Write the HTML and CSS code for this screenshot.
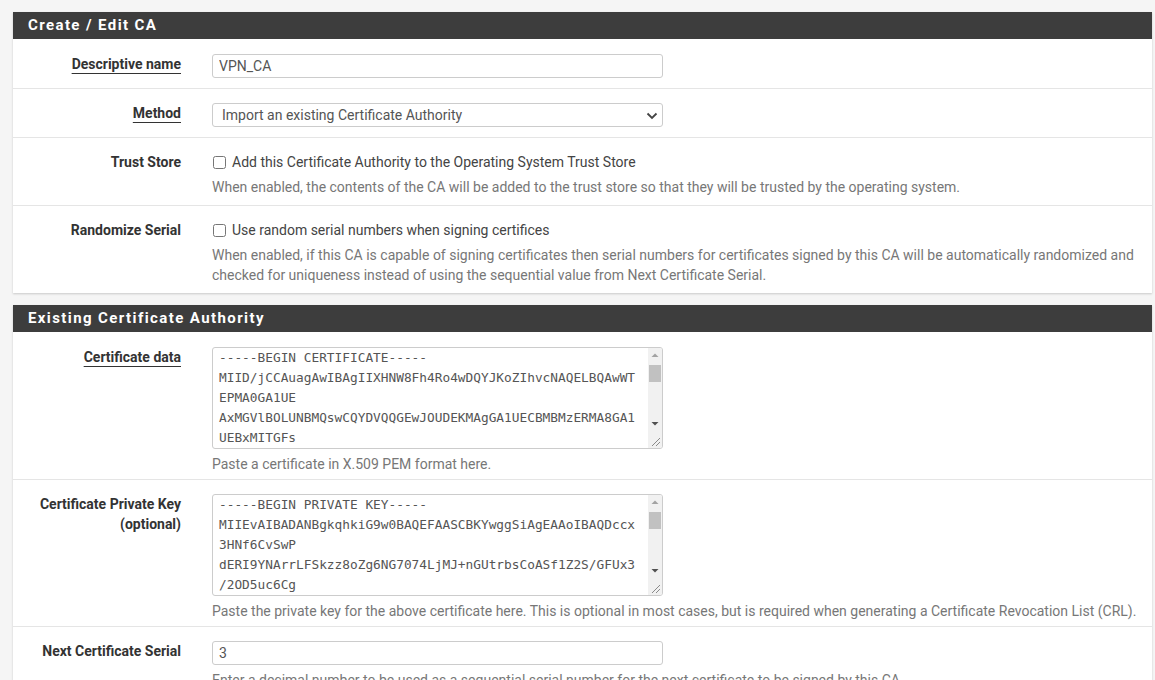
FILE: index.html
```html
<!DOCTYPE html>
<html>
<head>
<meta charset="utf-8">
<link rel="stylesheet" href="styles.css">
</head>
<body>
<div class="panel">
  <div class="panel-heading">Create / Edit CA</div>
  <div class="form-row">
    <div class="label-col"><span class="req">Descriptive name</span></div>
    <div class="field-col">
      <input class="text-input" type="text" value="VPN_CA">
    </div>
  </div>
  <div class="form-row">
    <div class="label-col"><span class="req">Method</span></div>
    <div class="field-col">
      <div class="select-wrap">
        <select class="select-input">
          <option>Import an existing Certificate Authority</option>
        </select>
        <svg class="chevron" width="12" height="8" viewBox="0 0 12 8"><path d="M1.5 1.5 L6 6 L10.5 1.5" fill="none" stroke="#444" stroke-width="1.8"/></svg>
      </div>
    </div>
  </div>
  <div class="form-row check-row">
    <div class="label-col">Trust Store</div>
    <div class="field-col">
      <label class="check-line"><input type="checkbox" class="check"> Add this Certificate Authority to the Operating System Trust Store</label>
      <div class="help">When enabled, the contents of the CA will be added to the trust store so that they will be trusted by the operating system.</div>
    </div>
  </div>
  <div class="form-row check-row">
    <div class="label-col">Randomize Serial</div>
    <div class="field-col">
      <label class="check-line"><input type="checkbox" class="check"> Use random serial numbers when signing certifices</label>
      <div class="help">When enabled, if this CA is capable of signing certificates then serial numbers for certificates signed by this CA will be automatically randomized and checked for uniqueness instead of using the sequential value from Next Certificate Serial.</div>
    </div>
  </div>
</div>

<div class="panel">
  <div class="panel-heading">Existing Certificate Authority</div>
  <div class="form-row area-row">
    <div class="label-col"><span class="req">Certificate data</span></div>
    <div class="field-col">
      <div class="area-wrap">
        <textarea class="area" spellcheck="false">-----BEGIN CERTIFICATE-----
MIID/jCCAuagAwIBAgIIXHNW8Fh4Ro4wDQYJKoZIhvcNAQELBQAwWT
EPMA0GA1UE
AxMGVlBOLUNBMQswCQYDVQQGEwJOUDEKMAgGA1UECBMBMzERMA8GA1
UEBxMITGFs
aXRwdXIxDDAKBgNVBAoTA0VOQzEUMBIGA1UECxMLRW5naW5lZXJp
bmcwHhcNMjQwMTE1MTAzMDAwWhcNMzQwMTEyMTAzMDAwWjBTMQ8w
DQYDVQQDEwZWUE5fQ0ExCzAJBgNVBAYTAk5QMQowCAYDVQQIEwEz
MREwDwYDVQQHEwhMYWxpdHB1cjEMMAoGA1UEChMDRU5DMRQwEgYD
VQQLEwtFbmdpbmVlcmluZzCCASIwDQYJKoZIhvcNAQEBBQADggEP
ADCCAQoCggEBALx2m9QfG5hXk3ZpT1bVqK8cR2nL0wYdE4sHa7uJ
Pq9Xc3BvN6tM1yRkF8wGe2iLz5oD0sAh7jUqW4nVb9yTc1KpX3mE
-----END CERTIFICATE-----</textarea>
        <div class="fake-scroll" aria-hidden="true">
          <div class="sb-btn"><svg width="14" height="15" viewBox="0 0 14 15"><path d="M3.5 9 L7 5.5 L10.5 9 Z" fill="#a3a3a3"/></svg></div>
          <div class="sb-track"><div class="sb-thumb"></div></div>
          <div class="sb-btn"><svg width="14" height="15" viewBox="0 0 14 15"><path d="M3.5 6 L7 9.5 L10.5 6 Z" fill="#505050"/></svg></div>
          <div class="sb-corner"><svg width="14" height="15" viewBox="0 0 14 15"><path d="M4 13 L12 5 M8 13 L12 9" stroke="#8a8a8a" stroke-width="1"/></svg></div>
        </div>
      </div>
      <div class="help">Paste a certificate in X.509 PEM format here.</div>
    </div>
  </div>
  <div class="form-row area-row">
    <div class="label-col">Certificate Private Key<br>(optional)</div>
    <div class="field-col">
      <div class="area-wrap">
        <textarea class="area" spellcheck="false">-----BEGIN PRIVATE KEY-----
MIIEvAIBADANBgkqhkiG9w0BAQEFAASCBKYwggSiAgEAAoIBAQDccx
3HNf6CvSwP
dERI9YNArrLFSkzz8oZg6NG7074LjMJ+nGUtrbsCoASf1Z2S/GFUx3
/2OD5uc6Cg
Vb3kQx9LmT2pWc7YhN4sJ0aR8eFz1uGdK6oBvX5nMq3tHy7iLp0E
rS2wCf9jA4gUk1xZo8NbT6mY3vQe5hPl7dWs0cKi2RtJ9uFa4nGx
Hq1oL8zMb3yV6eXp5TcN0sIw7kD2rAf4gUj9QmZ1hBvYt6lKo3Ex
Wn8pS2cRd5uJ0aLq7fM4iHz1gT9yBk3eVx6oNs2tCm8rPj5Gw0Dl
Fb4uK7hQz2yXe9mA1oRt3sLw6cNv0iJp5gTd8kBq2HfMx4Ey7Uj1
-----END PRIVATE KEY-----</textarea>
        <div class="fake-scroll" aria-hidden="true">
          <div class="sb-btn"><svg width="14" height="15" viewBox="0 0 14 15"><path d="M3.5 9 L7 5.5 L10.5 9 Z" fill="#a3a3a3"/></svg></div>
          <div class="sb-track"><div class="sb-thumb"></div></div>
          <div class="sb-btn"><svg width="14" height="15" viewBox="0 0 14 15"><path d="M3.5 6 L7 9.5 L10.5 6 Z" fill="#505050"/></svg></div>
          <div class="sb-corner"><svg width="14" height="15" viewBox="0 0 14 15"><path d="M4 13 L12 5 M8 13 L12 9" stroke="#8a8a8a" stroke-width="1"/></svg></div>
        </div>
      </div>
      <div class="help">Paste the private key for the above certificate here. This is optional in most cases, but is required when generating a Certificate Revocation List (CRL).</div>
    </div>
  </div>
  <div class="form-row">
    <div class="label-col">Next Certificate Serial</div>
    <div class="field-col">
      <input class="text-input" type="text" value="3">
      <div class="help">Enter a decimal number to be used as a sequential serial number for the next certificate to be signed by this CA.</div>
    </div>
  </div>
</div>
</body>
</html>
```
FILE: styles.css
```css
html, body {
  margin: 0;
  padding: 0;
}
body {
  background: #f5f5f5;
  font-family: Roboto, "Liberation Sans", Arial, sans-serif;
  font-size: 14px;
  color: #333;
  padding: 12px 3px 0 13px;
}
.panel {
  background: #fff;
  box-shadow: 0 1px 2px rgba(0, 0, 0, 0.18);
  margin-bottom: 12px;
}
.panel-heading {
  background: #3d3d3d;
  color: #fff;
  font-weight: bold;
  font-size: 15px;
  height: 27px;
  line-height: 27px;
  padding: 0 15px;
  letter-spacing: 1.4px;
}
.form-row {
  display: flex;
  border-top: 1px solid #e5e5e5;
  padding: 14px 0 9px;
}
.panel-heading + .form-row {
  border-top: none;
  padding-top: 15px;
}
.check-row {
  padding-bottom: 8px;
}
.area-row {
  padding-bottom: 5px;
}
.label-col {
  width: 168px;
  padding-right: 15px;
  text-align: right;
  font-weight: bold;
  line-height: 20px;
  color: #333;
}
.req {
  text-decoration: underline;
  text-decoration-thickness: 1px;
  text-underline-offset: 4px;
}
.field-col {
  flex: 1;
  padding-left: 16px;
  padding-right: 15px;
}
.text-input,
.select-input {
  display: block;
  box-sizing: border-box;
  width: 451px;
  height: 24px;
  border: 1px solid #ccc;
  border-radius: 3px;
  background: #fff;
  font-family: Roboto, "Liberation Sans", Arial, sans-serif;
  font-size: 14px;
  color: #555;
  padding: 0 6px;
  margin: 0 0 1px;
  outline: none;
}
.select-wrap {
  position: relative;
  width: 451px;
}
.select-input {
  appearance: none;
  -webkit-appearance: none;
  padding-left: 9px;
}
.chevron {
  position: absolute;
  right: 5px;
  top: 9px;
  pointer-events: none;
}
.check-line {
  display: flex;
  align-items: center;
  line-height: 20px;
  color: #444;
}
.check {
  width: 13px;
  height: 13px;
  margin: 0 6px 0 1px;
}
.help {
  margin-top: 5px;
  line-height: 20px;
  color: #777;
}
.area-wrap {
  position: relative;
  width: 451px;
  height: 102px;
}
.area {
  display: block;
  box-sizing: border-box;
  width: 451px;
  height: 102px;
  border: 1px solid #ccc;
  border-radius: 3px;
  padding: 0 20px 0 6px;
  margin: 0;
  font-family: "DejaVu Sans Mono", "Liberation Mono", monospace;
  font-size: 12.8px;
  line-height: 20px;
  color: #555;
  resize: none;
  outline: none;
  white-space: pre;
  overflow: hidden;
}
.fake-scroll {
  position: absolute;
  top: 1px;
  right: 1px;
  bottom: 1px;
  width: 14px;
  background: #f1f1f1;
  display: flex;
  flex-direction: column;
  pointer-events: none;
  border-radius: 0 2px 2px 0;
}
.sb-btn {
  height: 15px;
  flex: none;
}
.sb-btn svg,
.sb-corner svg {
  display: block;
}
.sb-track {
  flex: 1;
  padding-top: 2px;
}
.sb-thumb {
  width: 12px;
  height: 17px;
  margin: 0 auto;
  background: #c1c1c1;
}
.sb-corner {
  height: 15px;
  flex: none;
  margin-top: 2px;
}
```
